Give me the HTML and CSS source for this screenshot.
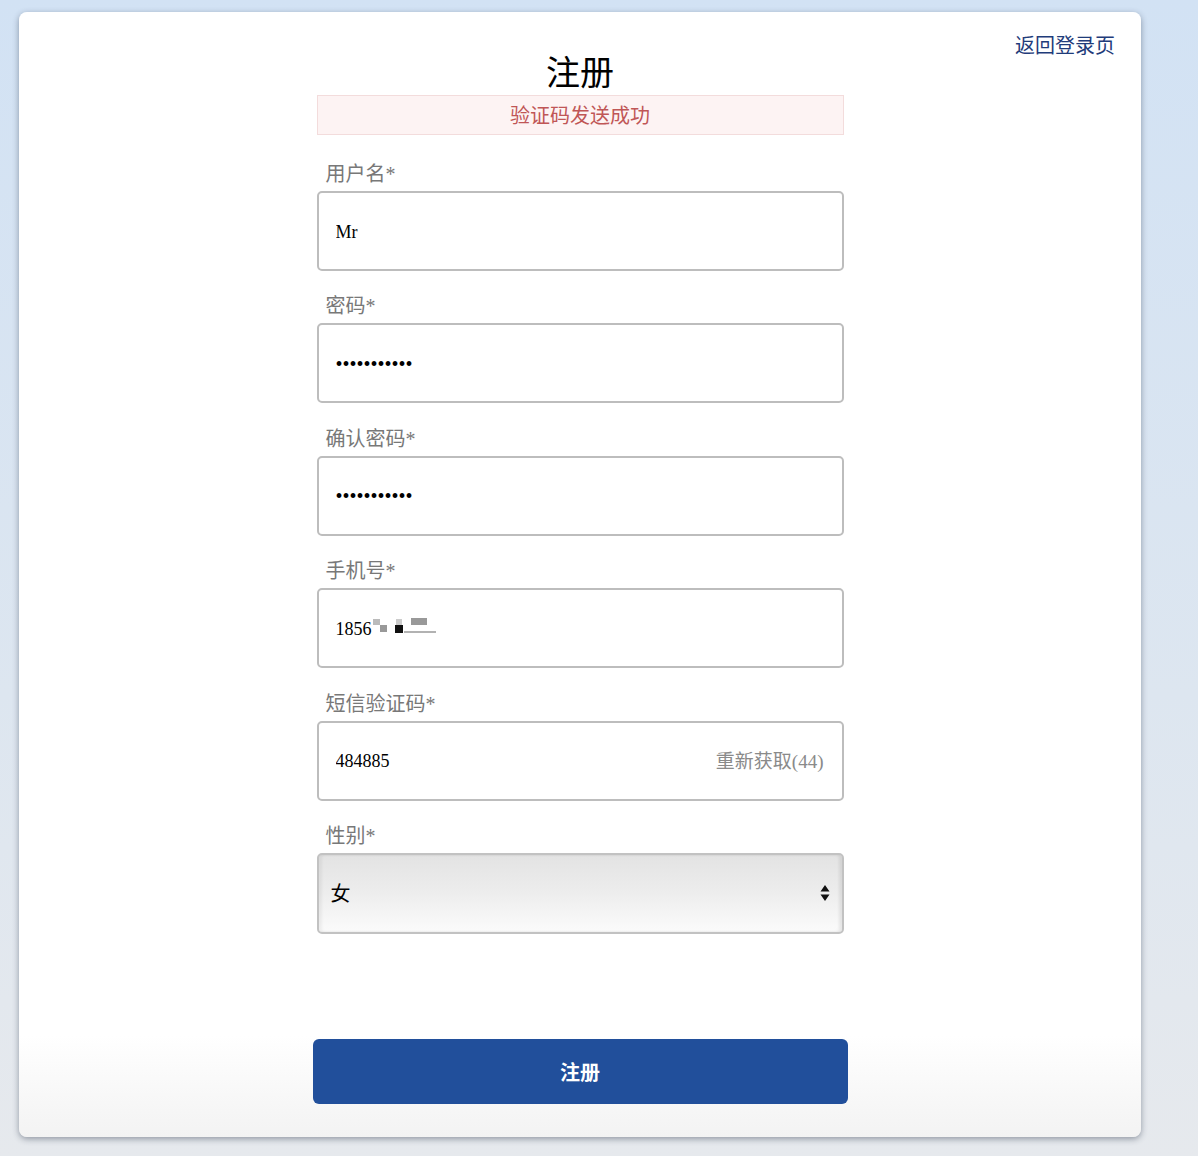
FILE: index.html
```html
<!DOCTYPE html>
<html lang="zh">
<head>
<meta charset="utf-8">
<title>注册</title>
<link rel="stylesheet" href="styles.css">
</head>
<body>
<div class="card">
  <div class="header">
    <div></div>
    <h1 class="title">注册</h1>
    <a class="back" href="#">返回登录页</a>
  </div>
  <form class="form">
    <div class="alert">验证码发送成功</div>
    <div class="group first">
      <label class="label">用户名*</label>
      <input class="field" type="text" value="Mr">
    </div>
    <div class="group">
      <label class="label">密码*</label>
      <input class="field pw" type="password" value="12345678901">
    </div>
    <div class="group">
      <label class="label">确认密码*</label>
      <input class="field pw" type="password" value="12345678901">
    </div>
    <div class="group">
      <label class="label">手机号*</label>
      <div class="field phone">1856<span class="mask"><i class="px p1"></i><i class="px p2"></i><i class="px p3"></i><i class="px p4"></i><i class="px p5"></i><i class="px p6"></i></span></div>
    </div>
    <div class="group">
      <label class="label">短信验证码*</label>
      <div class="sms">
        <input class="field" type="text" value="484885">
        <span class="resend">重新获取(44)</span>
      </div>
    </div>
    <div class="group">
      <label class="label">性别*</label>
      <div class="select-wrap">
        <select class="select"><option>女</option><option>男</option></select>
        <svg class="arrows" width="10" height="18" viewBox="0 0 10 18"><path d="M5 1 L9.5 7.5 H0.5 Z M5 17 L9.5 10.5 H0.5 Z" fill="#111"/></svg>
      </div>
    </div>
    <button class="submit" type="button">注册</button>
  </form>
</div>
</body>
</html>
```

FILE: styles.css
```css
html, body {
  margin: 0;
  padding: 0;
}
body {
  width: 1198px;
  height: 1156px;
  background: linear-gradient(to bottom, #d2e2f4 0%, #dde6f0 60%, #e6e9ed 100%);
  font-family: "Liberation Serif", "Noto Sans CJK SC", serif;
  overflow: hidden;
}
.card {
  box-sizing: border-box;
  margin: 12px 0 0 19px;
  width: 1122px;
  height: 1125px;
  background: linear-gradient(to bottom, #ffffff 0%, #ffffff 91%, #f3f3f3 100%);
  border-radius: 8px;
  box-shadow: 0 2px 6px rgba(40, 50, 70, 0.45);
  padding-top: 21px;
}
.header {
  display: grid;
  grid-template-columns: 1fr auto 1fr;
  align-items: start;
}
.title {
  margin: 21px 0 0 0;
  font-size: 34px;
  line-height: 40px;
  font-weight: normal;
  color: #000;
}
.back {
  justify-self: end;
  margin-right: 26px;
  padding-top: 1px;
  font-size: 20px;
  line-height: 24px;
  color: #1f3c7a;
  text-decoration: none;
}
.form {
  width: 527px;
  margin: 1px auto 0 auto;
  display: flex;
  flex-direction: column;
}
.alert {
  box-sizing: border-box;
  height: 40px;
  background: #fdf3f3;
  border: 1px solid #f3dcdc;
  color: #c05656;
  font-size: 20px;
  line-height: 41px;
  text-align: center;
}
.group {
  display: flex;
  flex-direction: column;
  margin-top: 21.4px;
}
.group.first {
  margin-top: 25px;
}
.label {
  font-size: 20px;
  line-height: 24px;
  color: #787878;
  padding-left: 9px;
  padding-top: 2px;
  margin-bottom: 5px;
}
.field {
  box-sizing: border-box;
  width: 100%;
  height: 80px;
  border: 2px solid #bdbdbd;
  border-radius: 5px;
  padding: 2px 17px 0 17px;
  font-family: "Liberation Serif", "Noto Sans CJK SC", serif;
  font-size: 18px;
  color: #000;
  background: #fff;
  outline: none;
}
.pw {
  font-size: 20px;
  letter-spacing: 0px;
}
.phone {
  display: flex;
  align-items: center;
}
.mask {
  position: relative;
  display: inline-block;
  width: 66px;
  height: 20px;
}
.px {
  position: absolute;
  display: block;
}
.p1 { left: 1px; top: 0; width: 7px; height: 6px; background: #bbb; }
.p2 { left: 8px; top: 6px; width: 7px; height: 7px; background: #999; }
.p3 { left: 24px; top: 0; width: 6px; height: 6px; background: #ccc; }
.p4 { left: 23px; top: 6px; width: 8px; height: 8px; background: #111; }
.p5 { left: 39px; top: -1px; width: 16px; height: 7px; background: #999; }
.p6 { left: 32px; top: 12px; width: 32px; height: 2px; background: #666; opacity: 0.5; }
.sms {
  position: relative;
}
.resend {
  position: absolute;
  right: 20px;
  top: 1px;
  line-height: 80px;
  font-size: 19px;
  color: #8a8a8a;
}
.select-wrap {
  position: relative;
}
.select {
  -webkit-appearance: none;
  appearance: none;
  box-sizing: border-box;
  width: 100%;
  height: 81px;
  border: 2px solid #c2c2c2;
  border-radius: 5px;
  padding: 2px 12px 0 12px;
  font-family: "Liberation Serif", "Noto Sans CJK SC", serif;
  font-size: 20px;
  color: #000;
  background: linear-gradient(to bottom, #e3e3e3 0%, #ececec 45%, #fbfbfb 100%);
  box-shadow: inset -3px 0 3px rgba(0,0,0,0.08), inset 3px 0 3px rgba(0,0,0,0.05);
  outline: none;
}
.arrows {
  position: absolute;
  right: 14px;
  top: 31px;
}
.submit {
  margin: 105px -4px 0 -4px;
  height: 65px;
  border: none;
  border-radius: 6px;
  background: #214f9b;
  color: #fff;
  font-family: "Liberation Serif", "Noto Sans CJK SC", serif;
  font-size: 20px;
  font-weight: bold;
}
```
